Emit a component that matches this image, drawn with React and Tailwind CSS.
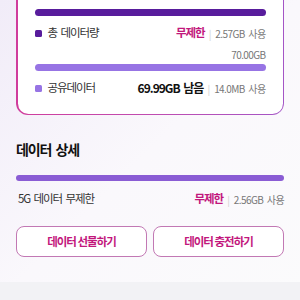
import React from "react";

const font = { fontFamily: '"Noto Sans CJK KR", "Noto Sans", sans-serif' };

function Sep() {
  return <span className="mx-[4px] text-[#d0d0d0] text-[10px]">|</span>;
}

export default function App() {
  return (
    <div
      className="w-[300px] h-[300px] overflow-hidden bg-gradient-to-br from-[#f1ecf8] via-[#faf8fc] to-[#fbfbfc] flex flex-col [word-spacing:2px]"
      style={font}
    >
      <div className="px-[16px] -mt-[20px]">
        <div className="rounded-[12px] p-[1.5px] bg-gradient-to-r from-[#d03c9c] via-[#c04cb0] to-[#a455c6]">
          <div className="rounded-[10.5px] bg-white px-[17px] pt-[27.5px] pb-[17.5px]">
            <div className="h-[7px] rounded-full bg-[#581c9c]" />
            <div className="mt-[9px] h-[16px] flex items-center">
              <span className="w-[7px] h-[7px] rounded-[1.5px] bg-[#581c9c]" />
              <span className="ml-[6px] text-[11.5px] text-[#333] tracking-[-1.1px]">총 데이터량</span>
              <span className="ml-auto text-[11.5px] font-bold text-[#c2177c] tracking-[-1px]">무제한</span>
              <Sep />
              <span className="text-[10px] text-[#777] tracking-[-0.6px]">2.57GB 사용</span>
            </div>
            <div className="mt-[6px] h-[14px] flex justify-end items-center text-[10px] text-[#777] tracking-[-0.6px]">
              70.00GB
            </div>
            <div className="mt-[3px] h-[7px] rounded-full bg-[#9774e4]" />
            <div className="mt-[9px] h-[16px] flex items-center">
              <span className="w-[7px] h-[7px] rounded-[1.5px] bg-[#9774e4]" />
              <span className="ml-[6px] text-[11.5px] text-[#333] tracking-[-1.1px]">공유데이터</span>
              <span className="ml-auto text-[12px] font-bold text-[#111] tracking-[-1px]">69.99GB 남음</span>
              <Sep />
              <span className="text-[10px] text-[#777] tracking-[-0.6px]">14.0MB 사용</span>
            </div>
          </div>
        </div>
      </div>

      <div className="px-[16px] mt-[23px]">
        <div className="h-[22px] flex items-center text-[14px] font-bold text-[#111] tracking-[-1.1px]">데이터 상세</div>
        <div className="mt-[15px] h-[6px] rounded-full bg-[#8a5cd4]" />
        <div className="mt-[10px] h-[16px] flex items-center">
          <span className="ml-[2px] text-[11.5px] text-[#333] tracking-[-1.1px]">5G 데이터 무제한</span>
          <span className="ml-auto text-[11.5px] font-bold text-[#c2177c] tracking-[-1px]">무제한</span>
          <Sep />
          <span className="text-[10px] text-[#777] tracking-[-0.6px]">2.56GB 사용</span>
        </div>
        <div className="mt-[19px] grid grid-cols-2 gap-[6px]">
          <button className="h-[31px] rounded-[8px] border-[1.5px] border-[#c278b4] bg-white text-[11.5px] font-bold text-[#c2177c] tracking-[-1px]">
            데이터 선물하기
          </button>
          <button className="h-[31px] rounded-[8px] border-[1.5px] border-[#c278b4] bg-white text-[11.5px] font-bold text-[#c2177c] tracking-[-1px]">
            데이터 충전하기
          </button>
        </div>
      </div>

      <div className="mt-auto h-[18px] bg-[#f2f2f5]" />
    </div>
  );
}
